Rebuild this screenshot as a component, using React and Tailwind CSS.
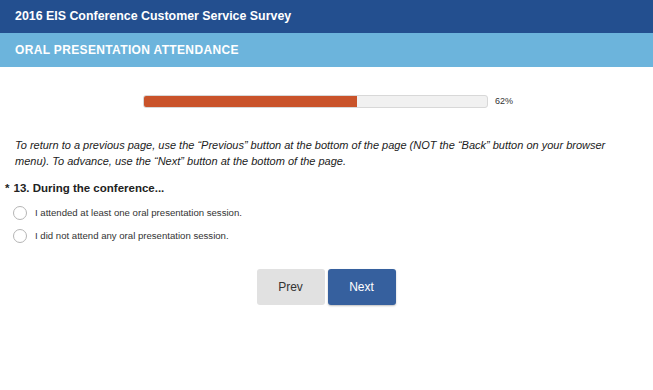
const options = [
  'I attended at least one oral presentation session.',
  'I did not attend any oral presentation session.',
];

export default function App() {
  const progress = 62;

  return (
    <div className="min-h-[390px] w-full bg-white font-['Liberation_Sans',Arial,sans-serif] text-[#333]">
      <header className="flex h-[33px] items-center bg-[#234f8f] px-[15px]">
        <h1 className="text-[12.4px] font-bold text-white">2016 EIS Conference Customer Service Survey</h1>
      </header>
      <div className="flex h-[34px] items-center bg-[#6cb4dc] px-[15px]">
        <h2 className="text-[12px] font-bold tracking-[0.35px] text-white">ORAL PRESENTATION ATTENDANCE</h2>
      </div>

      <div className="flex items-center pl-[143px] pt-[28px]">
        <div className="h-[13px] w-[345px] overflow-hidden rounded-[3px] border border-[#d8d8d8] bg-[#f1f1f1]">
          <div className="h-full bg-[#c9532a]" style={{ width: `${progress}%` }} />
        </div>
        <span className="ml-[7px] text-[9px] text-[#333]">{progress}%</span>
      </div>

      <p className="mt-[28px] px-[15px] text-[11px] italic leading-[16px] text-[#222]">
        To return to a previous page, use the “Previous” button at the bottom of the page (NOT the “Back” button on your browser
        menu). To advance, use the “Next” button at the bottom of the page.
      </p>

      <div className="mt-[11px] flex items-baseline pl-[5px] text-[11.5px] font-bold text-[#222]">
        <span className="mr-[4px]">*</span>
        <span>13. During the conference...</span>
      </div>

      <div className="mt-[9px] flex flex-col gap-[9px] pl-[13px]">
        {options.map((label) => (
          <label key={label} className="flex items-center gap-[8px]">
            <span className="size-[14px] rounded-full border border-[#b5b5b5] bg-white" />
            <span className="text-[9.6px] text-[#333]">{label}</span>
          </label>
        ))}
      </div>

      <div className="mt-[25px] flex justify-center gap-[3px] pr-[1px]">
        <button
          type="button"
          className="h-[36px] w-[68px] rounded-[3px] bg-[#e1e1e1] text-[12px] text-[#333]"
        >
          Prev
        </button>
        <button
          type="button"
          className="h-[36px] w-[68px] rounded-[3px] bg-[#36609e] text-[12px] text-white shadow-[0_1px_2px_rgba(0,0,0,0.25)]"
        >
          Next
        </button>
      </div>
    </div>
  );
}
